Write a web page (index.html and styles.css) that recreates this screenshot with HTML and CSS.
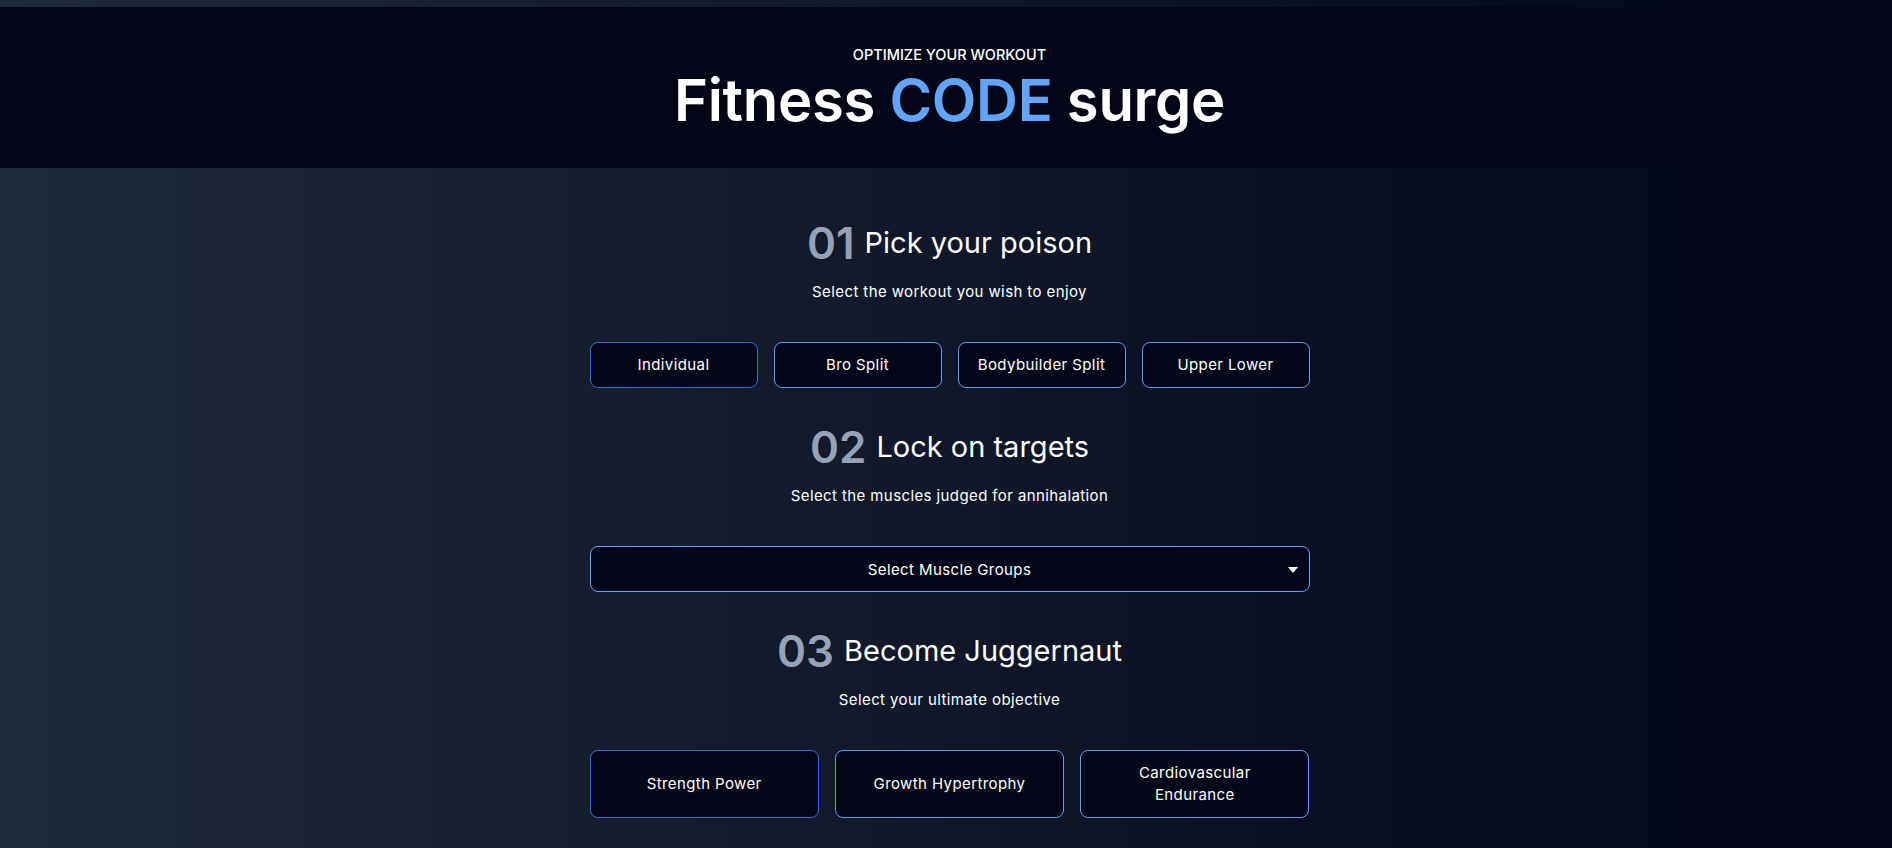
FILE: index.html
```html
<!DOCTYPE html>
<html lang="en">
<head>
<meta charset="utf-8">
<title>Fitness CODE surge</title>
<link rel="stylesheet" href="styles.css">
</head>
<body>
<div class="page">
  <header class="hero">
    <div class="hero-inner">
      <p class="eyebrow">OPTIMIZE YOUR WORKOUT</p>
      <h1 class="title">Fitness <span class="accent">CODE</span> surge</h1>
    </div>
  </header>
  <main class="main">
    <section class="step">
      <h2 class="step-head"><span class="step-num">01</span><span class="step-title">Pick your poison</span></h2>
      <p class="step-sub">Select the workout you wish to enjoy</p>
      <div class="options four">
        <button class="opt first">Individual</button>
        <button class="opt">Bro Split</button>
        <button class="opt">Bodybuilder Split</button>
        <button class="opt">Upper Lower</button>
      </div>
    </section>
    <section class="step">
      <h2 class="step-head"><span class="step-num">02</span><span class="step-title">Lock on targets</span></h2>
      <p class="step-sub">Select the muscles judged for annihalation</p>
      <div class="select">
        <span class="select-label">Select Muscle Groups</span>
        <span class="caret"></span>
      </div>
    </section>
    <section class="step">
      <h2 class="step-head"><span class="step-num">03</span><span class="step-title">Become Juggernaut</span></h2>
      <p class="step-sub">Select your ultimate objective</p>
      <div class="options three">
        <button class="opt first">Strength Power</button>
        <button class="opt">Growth Hypertrophy</button>
        <button class="opt">Cardiovascular Endurance</button>
      </div>
    </section>
  </main>
</div>
</body>
</html>
```
FILE: styles.css
```css
* { box-sizing: border-box; }
html, body { margin: 0; padding: 0; height: 100%; }
body {
  font-family: Inter, "Open Sans", sans-serif;
  color: #ffffff;
  background: #0f172a;
}
.page {
  min-height: 100vh;
  padding-top: 7px;
  background: linear-gradient(to right, #1e293b 0%, #020617 100%);
}
.hero {
  background: #020617;
  padding: 38px 0 36px;
}
.hero-inner {
  padding-left: 7px;
  text-align: center;
}
.eyebrow {
  margin: 0;
  font-size: 14.5px;
  line-height: 20px;
  font-weight: 500;
}
.title {
  margin: 3px 0 0;
  font-size: 58px;
  line-height: 64px;
  font-weight: 600;
  letter-spacing: -0.3px;
}
.accent { color: #60a5fa; }
.main {
  padding: 51px 0 40px 7px;
  display: flex;
  flex-direction: column;
  align-items: center;
  gap: 35px;
}
.step {
  width: 720px;
  display: flex;
  flex-direction: column;
  align-items: center;
}
.step-head {
  margin: 0 0 15px;
  height: 48px;
  display: flex;
  align-items: center;
  justify-content: center;
  gap: 10px;
  font-weight: 400;
}
.step-num {
  font-size: 44px;
  line-height: 48px;
  font-weight: 600;
  color: #94a3b8;
}
.step-title {
  font-size: 29px;
  line-height: 36px;
}
.step-sub {
  margin: 0 0 40px;
  font-size: 15px;
  line-height: 20px;
  letter-spacing: 0.4px;
}
.options {
  width: 100%;
  display: grid;
  gap: 16px;
}
.options.four { grid-template-columns: repeat(4, 1fr); }
.options.three { grid-template-columns: repeat(3, 1fr); }
.opt {
  font-family: inherit;
  font-size: 15px;
  line-height: 22px;
  letter-spacing: 0.4px;
  color: #ffffff;
  background: #020617;
  border: 1px solid #5b9cf0;
  border-radius: 8px;
  padding: 11px 10px;
  text-align: center;
}
.options.three .opt { padding: 11px 22px; }
.opt.first { border-color: #2a6de0; }
.select {
  position: relative;
  width: 100%;
  height: 46px;
  background: #020617;
  border: 1px solid #60a5fa;
  border-radius: 8px;
  display: flex;
  align-items: center;
  justify-content: center;
  font-size: 15px;
  letter-spacing: 0.4px;
}
.caret {
  position: absolute;
  right: 11px;
  top: 20px;
  width: 0;
  height: 0;
  border-left: 5px solid transparent;
  border-right: 5px solid transparent;
  border-top: 6px solid #ffffff;
}
```
